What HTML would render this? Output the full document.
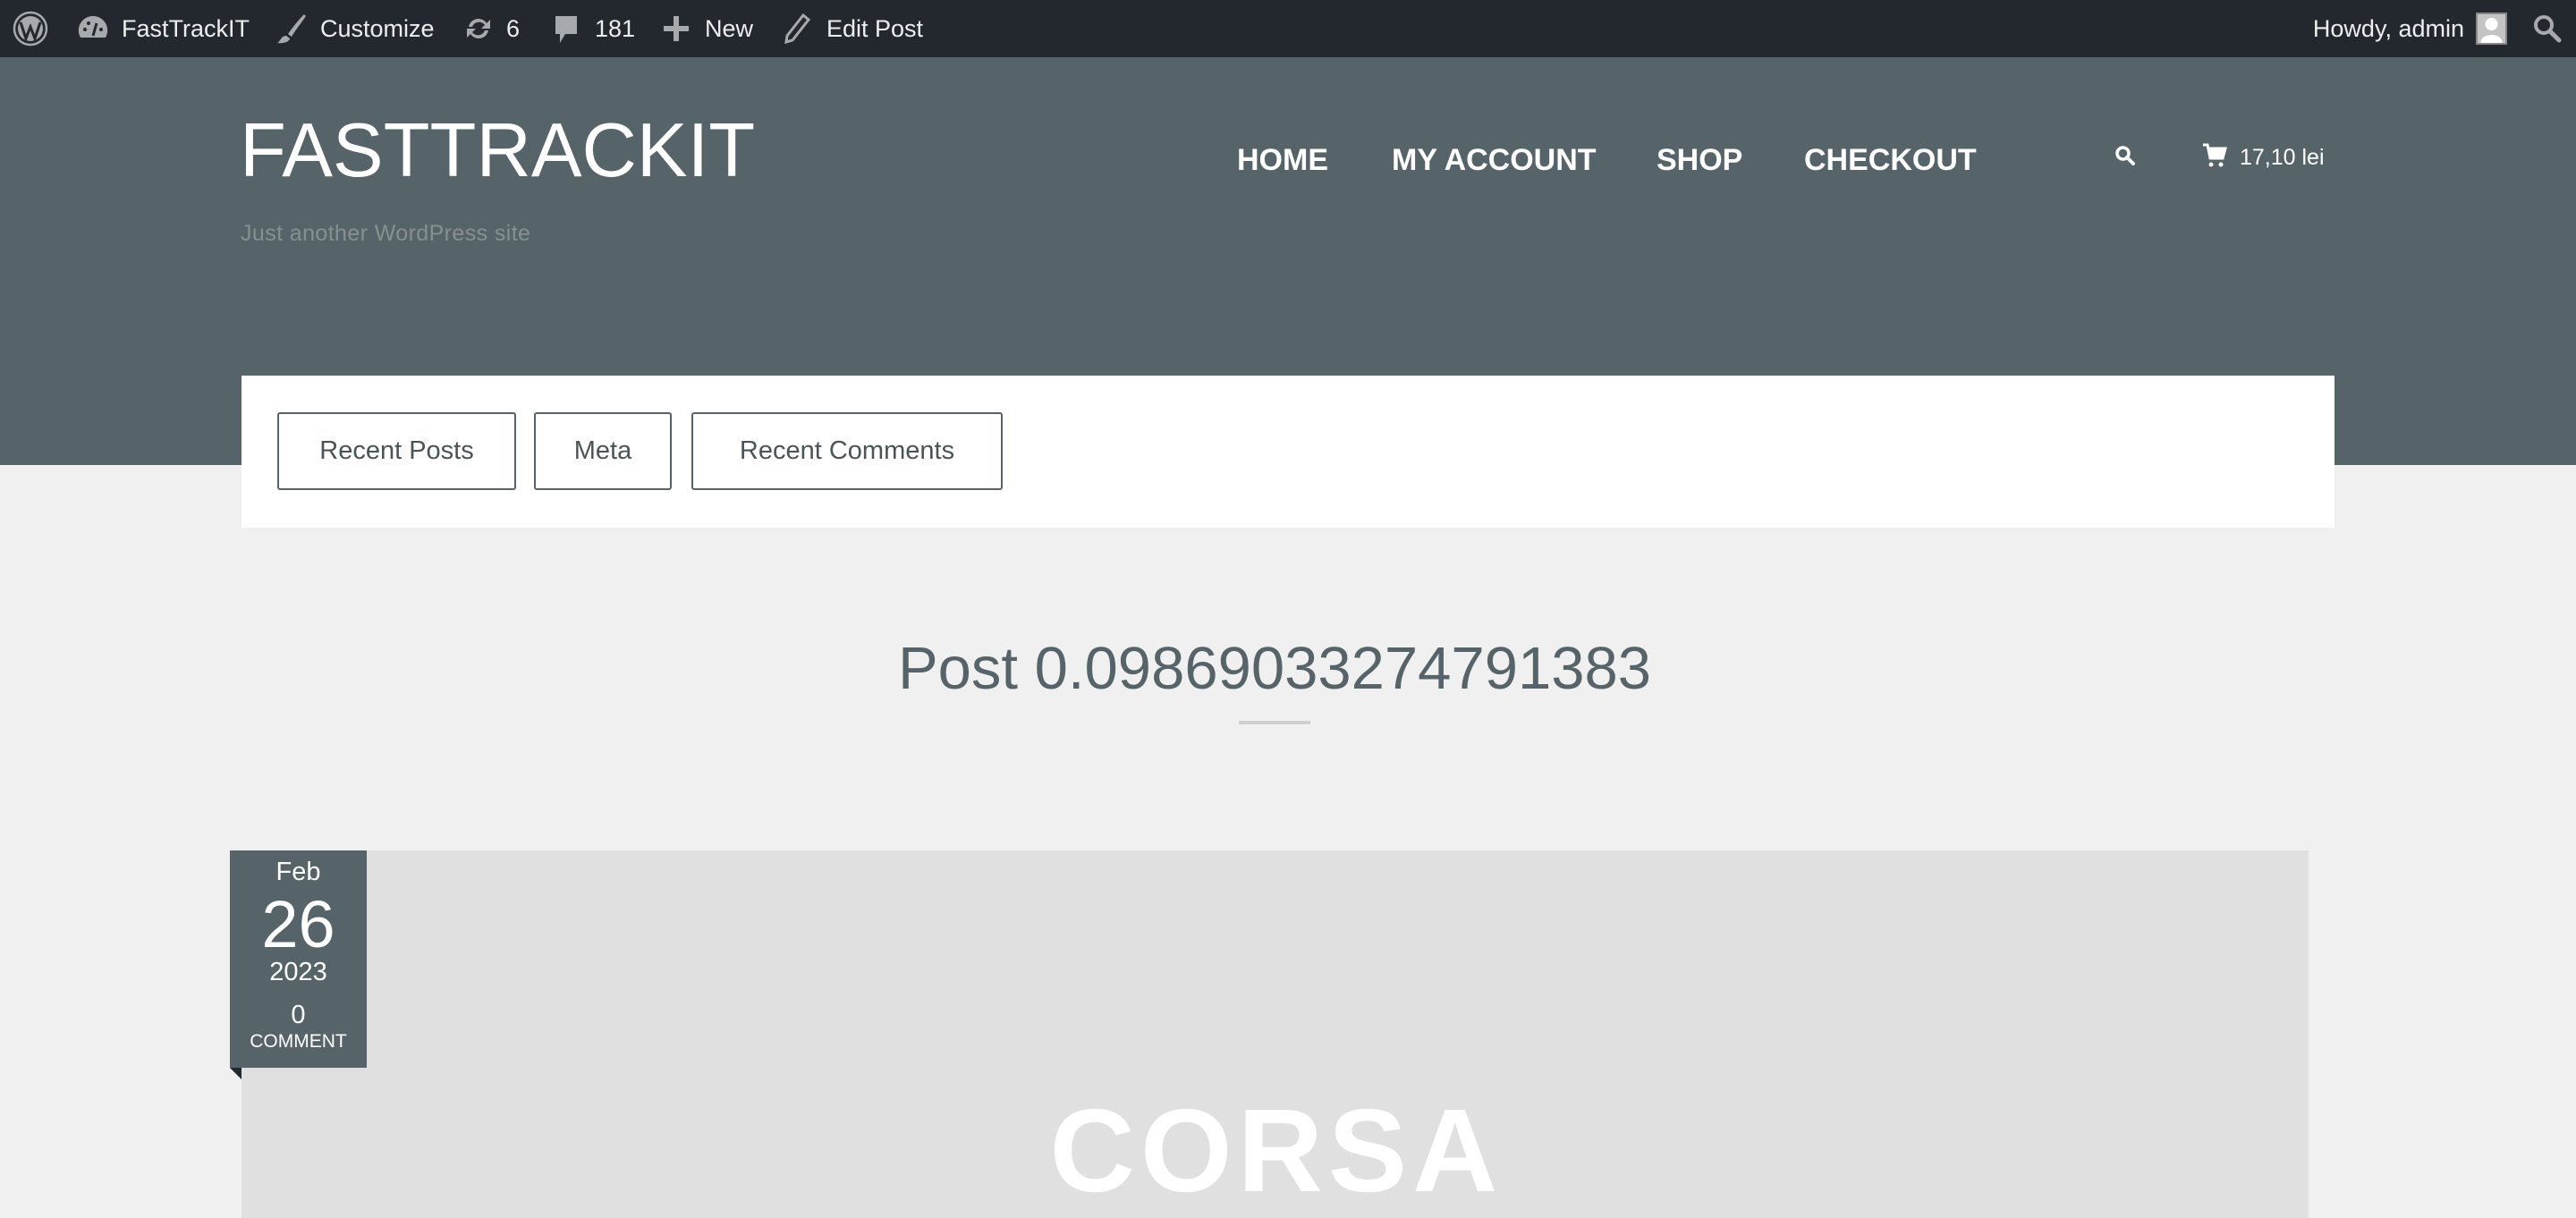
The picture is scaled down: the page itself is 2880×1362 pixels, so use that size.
<!DOCTYPE html>
<html><head><meta charset="utf-8">
<style>
*{margin:0;padding:0;box-sizing:border-box}
html,body{width:2880px;height:1362px;overflow:hidden;background:#f0f0f0;font-family:"Liberation Sans",sans-serif}
.a{position:absolute;white-space:nowrap}
#bar{position:absolute;left:0;top:0;width:2880px;height:64px;background:#23282e}
#bar .t{position:absolute;top:0;line-height:64px;font-size:27px;color:#eee}
#hdr{position:absolute;left:0;top:64px;width:2880px;height:456px;background:#566469}
.nav{position:absolute;top:93px;font-size:34px;font-weight:bold;color:#fff;line-height:44px}
.btn{position:absolute;top:461px;height:87px;border:2px solid #566469;border-radius:3px;font-size:29px;color:#4a5457;line-height:83px;text-align:center;background:#fff}
</style></head><body>
<div id="bar">
  <svg class="a" style="left:14px;top:12px" width="40" height="40" viewBox="0 0 40 40"><circle cx="20" cy="20" r="18" fill="none" stroke="#a7aaad" stroke-width="2.5"/><circle cx="20" cy="20" r="14" fill="#a7aaad"/><path d="M9 13 L15 31 L20 18 L25 31 L31 13" fill="none" stroke="#23282e" stroke-width="3"/></svg>
  <svg class="a" style="left:86px;top:16px" width="36" height="32" viewBox="0 0 36 32"><path d="M18 2 A16 16 0 0 0 4 26 L32 26 A16 16 0 0 0 18 2Z" fill="#a7aaad"/><path d="M18 24 L22 10" stroke="#23282e" stroke-width="3"/><circle cx="9" cy="17" r="2" fill="#23282e"/><circle cx="13" cy="10" r="2" fill="#23282e"/><circle cx="27" cy="17" r="2" fill="#23282e"/></svg>
  <div class="t" style="left:136px">FastTrackIT</div>
  <svg class="a" style="left:308px;top:14px" width="36" height="36" viewBox="0 0 36 36"><path d="M32 2 C26 8 18 18 14 24 L18 27 C22 20 30 10 34 4Z" fill="#a7aaad"/><path d="M12 26 C6 26 6 32 2 34 C10 35 16 32 16 29Z" fill="#a7aaad"/></svg>
  <div class="t" style="left:358px">Customize</div>
  <svg class="a" style="left:518px;top:16px" width="34" height="32" viewBox="0 0 34 32"><path d="M6 14 A11 11 0 0 1 26 10 L30 6 L30 16 L20 16 L24 12 A8 8 0 0 0 10 14Z M28 18 A11 11 0 0 1 8 22 L4 26 L4 16 L14 16 L10 20 A8 8 0 0 0 24 18Z" fill="#a7aaad"/></svg>
  <div class="t" style="left:566px">6</div>
  <svg class="a" style="left:618px;top:16px" width="30" height="36" viewBox="0 0 30 36"><path d="M3 2 H27 V22 H14 L8 32 V22 H3Z" fill="#a7aaad"/></svg>
  <div class="t" style="left:665px">181</div>
  <svg class="a" style="left:742px;top:18px" width="28" height="28" viewBox="0 0 28 28"><path d="M11 0H17V11H28V17H17V28H11V17H0V11H11Z" fill="#a7aaad"/></svg>
  <div class="t" style="left:788px">New</div>
  <svg class="a" style="left:876px;top:15px" width="30" height="34" viewBox="0 0 30 34"><path d="M22 2 L28 7 L10 30 L3 32 L4 25Z" fill="none" stroke="#a7aaad" stroke-width="3"/></svg>
  <div class="t" style="left:924px">Edit Post</div>
  <div class="t" style="right:125px;text-align:right">Howdy, admin</div>
  <div class="a" style="left:2768px;top:14px;width:35px;height:36px;background:#c4c4c4;border:2px solid #888;overflow:hidden"><svg width="31" height="32" viewBox="0 0 30 32"><circle cx="15" cy="11" r="7" fill="#fff"/><path d="M3 32 C3 20 27 20 27 32Z" fill="#fff"/></svg></div>
  <svg class="a" style="left:2832px;top:16px" width="32" height="32" viewBox="0 0 32 32"><circle cx="12" cy="12" r="9" fill="none" stroke="#a7aaad" stroke-width="4"/><path d="M19 19 L29 29" stroke="#a7aaad" stroke-width="5" stroke-linecap="round"/></svg>
</div>
<div id="hdr">
  <div class="a" style="left:268px;top:55px;font-size:85px;color:#fff;line-height:100px">FASTTRACKIT</div>
  <div class="a" style="left:269px;top:182px;font-size:25px;color:#86908f;letter-spacing:0.4px;line-height:30px">Just another WordPress site</div>
  <div class="nav" style="left:1383px">HOME</div>
  <div class="nav" style="left:1556px">MY ACCOUNT</div>
  <div class="nav" style="left:1852px">SHOP</div>
  <div class="nav" style="left:2017px">CHECKOUT</div>
  <svg class="a" style="left:2364px;top:98px" width="24" height="24" viewBox="0 0 24 24"><circle cx="9.5" cy="9.5" r="6.5" fill="none" stroke="#fff" stroke-width="3.5"/><path d="M14 14 L21 21" stroke="#fff" stroke-width="4" stroke-linecap="round"/></svg>
  <svg class="a" style="left:2462px;top:96px" width="28" height="28" viewBox="0 0 28 28"><path d="M1 2H6L9 17H23L26 6H8" fill="none" stroke="#fff" stroke-width="3"/><rect x="8" y="7" width="17" height="9" fill="#fff"/><circle cx="10" cy="24" r="2.5" fill="#fff"/><circle cx="21" cy="24" r="2.5" fill="#fff"/></svg>
  <div class="a" style="left:2504px;top:95px;font-size:25px;color:#fff;line-height:34px">17,10 lei</div>
</div>
<div class="a" style="left:270px;top:420px;width:2340px;height:170px;background:#fff"></div>
<div class="btn" style="left:310px;width:267px">Recent Posts</div>
<div class="btn" style="left:597px;width:154px">Meta</div>
<div class="btn" style="left:773px;width:348px">Recent Comments</div>
<div class="a" style="left:0;width:2850px;top:706px;text-align:center;font-size:67px;color:#566469;line-height:84px">Post 0.09869033274791383</div>
<div class="a" style="left:1385px;top:806px;width:80px;height:4px;background:#cfcfcf"></div>
<div class="a" style="left:270px;top:951px;width:2311px;height:411px;background:#e0e0e0"></div>
<div class="a" style="left:0;width:2854px;top:1212px;text-align:center;font-size:132px;font-weight:bold;color:#fff;line-height:150px;letter-spacing:6px">CORSA</div>
<div class="a" style="left:257px;top:951px;width:153px;height:243px;background:#566469;color:#fff;text-align:center">
  <div style="position:absolute;top:6px;width:100%;font-size:29px;line-height:36px">Feb</div>
  <div style="position:absolute;top:40px;width:100%;font-size:74px;line-height:86px">26</div>
  <div style="position:absolute;top:118px;width:100%;font-size:29px;line-height:36px">2023</div>
  <div style="position:absolute;top:166px;width:100%;font-size:29px;line-height:36px">0</div>
  <div style="position:absolute;top:201px;width:100%;font-size:21px;line-height:26px">COMMENT</div>
</div>
<svg class="a" style="left:257px;top:1194px" width="13" height="13" viewBox="0 0 13 13"><path d="M0 0H13V13Z" fill="#23282e"/></svg>
</body></html>
